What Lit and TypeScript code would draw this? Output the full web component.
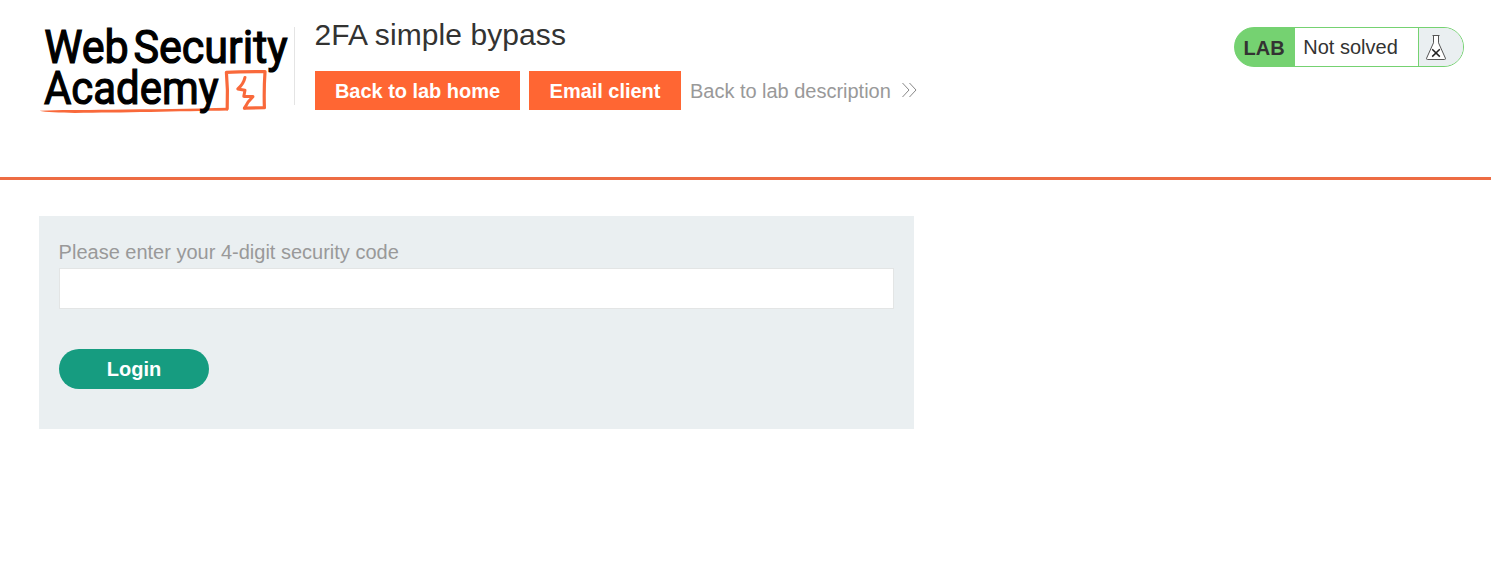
import { LitElement, html, css } from "lit";
import { customElement } from "lit/decorators.js";

@customElement("academy-logo")
class AcademyLogo extends LitElement {
  static styles = css`
    :host { display: block; width: 256px; height: 100px; }
    svg { display: block; overflow: visible; }
    .word { font-family: Roboto, "Liberation Sans", sans-serif; font-weight: 400; font-size: 46px; fill: #000; stroke: #000; stroke-width: 1.2px; }
    .line { fill: none; stroke: #f9693b; stroke-linecap: round; stroke-linejoin: round; }
    .tail { fill: #f9693b; }
  `;
  render() {
    return html`
      <svg width="256" height="100" viewBox="39 20 256 100" role="img" aria-label="Web Security Academy">
        <path class="tail" d="M39.5 110.8 C60 109.6 80 110 110 109.7 C150 109.4 195 108.8 228 107.8 L228 110.6 C180 111.4 120 112.8 75 112.9 C60 112.8 45 112.4 39.5 110.8Z" />
        <path class="line" stroke-width="3.2" d="M227.2 108.8 L227.4 90 L226.4 72.4 Q240 71.4 265 71.6 Q263.8 90 264.4 107.6 L244.4 108.2" />
        <path class="line" stroke-width="3" d="M245 77.4 Q243.6 84 237.8 89 L245 90.2 L243.8 96.4 L253 96.6 Q248 101 244.6 108" />
        <text class="word" x="44.2" y="62.5" textLength="84.6" lengthAdjust="spacingAndGlyphs">Web</text>
        <text class="word" x="133.4" y="62.5" textLength="154.2" lengthAdjust="spacingAndGlyphs">Security</text>
        <text class="word" x="44" y="103.5" textLength="174.5" lengthAdjust="spacingAndGlyphs">Academy</text>
      </svg>
    `;
  }
}

@customElement("lab-status")
class LabStatus extends LitElement {
  static styles = css`
    :host { display: flex; box-sizing: border-box; width: 230px; height: 40px; border: 1px solid #75d271; border-radius: 20px; overflow: hidden; background: linear-gradient(90deg, #75d271 60px, #fff 60px 183px, #eaeff1 183px); color: #333332; font-size: 20px; line-height: 38px; }
    .tag { box-sizing: border-box; width: 60px; padding-left: 8.5px; background: #75d271; font-weight: bold; line-height: 40px; }
    .state { box-sizing: border-box; width: 123px; padding-left: 8.3px; white-space: nowrap; }
    .flask { flex: 1; border-left: 1px solid #75d271; background: #eaeff1; }
    svg { display: block; }
  `;
  render() {
    return html`
      <div class="tag">LAB</div>
      <div class="state">Not solved</div>
      <div class="flask">
        <svg width="44" height="38" viewBox="1419 28 44 38" fill="none">
          <path d="M1432.5 35.5 H1439.5 M1433.5 35.5 V42.8 L1426.6 58.2 Q1426.2 59.5 1427.5 59.5 H1444.5 Q1445.8 59.5 1445.4 58.2 L1438.5 42.8 V35.5" fill="#fff" stroke="#555" stroke-width="1" />
          <path d="M1432.2 49.2 L1439.8 56.6 M1439.8 49.2 L1432.2 56.6" stroke="#222" stroke-width="1.5" />
        </svg>
      </div>
    `;
  }
}

@customElement("app-root")
class AppRoot extends LitElement {
  static styles = css`
    :host { display: block; height: 585px; background: #fff; font-family: "Liberation Sans", Arial, sans-serif; font-size: 20px; color: #333332; overflow: hidden; }
    header { display: flex; box-sizing: border-box; height: 180px; padding: 0 27px 0 39px; border-bottom: 3px solid #ed6c43; }
    academy-logo { margin-top: 20px; width: 255px; }
    .intro { margin-top: 27px; height: 78px; padding-left: 19.5px; border-left: 1px solid #e4e4e4; flex: 1; }
    h2 { margin: -11px 0 0; font-size: 30px; font-weight: normal; line-height: 38px; letter-spacing: 0.08px; }
    .links { display: flex; margin: 17px 0 0 0.5px; gap: 9px; line-height: 41px; white-space: nowrap; }
    .button { box-sizing: border-box; height: 39px; background: #ff6633; color: #fff; font-weight: bold; text-align: center; text-decoration: none; letter-spacing: -0.03px; }
    .home { width: 205px; }
    .email { width: 152px; }
    .back { display: flex; color: #999; text-decoration: none; letter-spacing: -0.02px; }
    .back svg { margin: 10px 0 0 10px; }
    lab-status { margin-top: 27px; }
    form { box-sizing: border-box; width: 875px; height: 213px; margin: 36px 0 0 39px; padding: 20px; background: #eaeff1; }
    label { display: block; height: 32px; line-height: 32px; color: #999; margin-left: -0.4px; }
    input { display: block; box-sizing: border-box; width: 835px; height: 41px; border: 1px solid #e3e5e5; border-radius: 0; background: #fff; padding: 0 10px; font: inherit; outline: none; }
    button { display: block; width: 150px; height: 40px; margin-top: 40px; padding: 0; border: 0; border-radius: 20px; background: #169c80; color: #fff; font: bold 20px "Liberation Sans", Arial, sans-serif; }
  `;
  render() {
    return html`
      <header>
        <academy-logo></academy-logo>
        <div class="intro">
          <h2>2FA simple bypass</h2>
          <div class="links">
            <a class="button home">Back to lab home</a>
            <a class="button email">Email client</a>
            <a class="back">
              <span>Back to lab description</span>
              <svg width="17" height="18" viewBox="0 0 17 18" fill="none" stroke="#888" stroke-width="1">
                <path d="M1.5 2 L8 9 L1.5 16 M8.5 2 L15 9 L8.5 16" />
              </svg>
            </a>
          </div>
        </div>
        <lab-status></lab-status>
      </header>
      <form>
        <label for="code">Please enter your 4-digit security code</label>
        <input id="code" type="text" />
        <button type="button">Login</button>
      </form>
    `;
  }
}
